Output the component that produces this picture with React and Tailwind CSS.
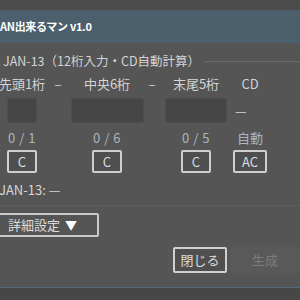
import React from "react";

const columns = [
  { label: "先頭1桁", count: "0 / 1", btn: "C", w: "w-[44px]", input: "w-[30px]" },
  { dash: true, w: "w-[28px]" },
  { label: "中央6桁", count: "0 / 6", btn: "C", w: "w-[70px]", input: "w-[73px]" },
  { dash: true, w: "w-[20px]" },
  { label: "末尾5桁", count: "0 / 5", btn: "C", w: "w-[68px]", input: "w-[62px]" },
];

function SmallButton({ children, className }) {
  return (
    <div
      className={
        "h-[23px] flex items-center justify-center border-2 border-[#cfcfcf] rounded-[2px] bg-[#4f4f4f] text-[13px] text-[#d6dde3] " +
        className
      }
    >
      {children}
    </div>
  );
}

function App() {
  return (
    <div className="w-[300px] h-[300px] overflow-hidden flex flex-col bg-[#4b4b4b] text-[#d4d4d4] font-['Noto_Sans_CJK_JP',sans-serif]">
      <div className="h-[10px] shrink-0" />
      <div className="h-[33px] shrink-0 bg-[#4b606c] flex items-center">
        <span className="-ml-[6px] text-[11px] font-bold tracking-[-0.3px] text-white whitespace-nowrap">
          JAN出来るマン v1.0
        </span>
      </div>

      <div className="h-[244px] shrink-0 bg-[#555555] flex flex-col">
        <div className="mt-[10px] h-[16px] flex items-center">
          <span className="ml-[3px] text-[12.5px] whitespace-nowrap">
            JAN-13（12桁入力・CD自動計算）
          </span>
          <div className="flex-1 h-px bg-[#6a6a6a] ml-[4px]" />
        </div>

        <div className="mt-[6px] flex">
          {columns.map((c, i) =>
            c.dash ? (
              <div key={i} className={c.w + " h-[18px] flex items-center justify-center text-[13px]"}>
                –
              </div>
            ) : (
              <div key={i} className={c.w + " flex flex-col items-center"}>
                <div className="h-[18px] flex items-center text-[13px] whitespace-nowrap">{c.label}</div>
                <div className={c.input + " mt-[5px] h-[25px] bg-[#464646] border border-[#4c4c4c] rounded-[3px]"} />
                <div className="mt-[5px] h-[20px] flex items-center text-[13px] tracking-[0.5px] text-[#aab5bf]">{c.count}</div>
                <SmallButton className="mt-[2px] w-[30px]">{c.btn}</SmallButton>
              </div>
            )
          )}
          <div className="w-[40px] flex flex-col items-center">
            <div className="h-[18px] flex items-center text-[13px]">CD</div>
            <div className="mt-[5px] h-[25px] w-full flex items-center pl-[5px] text-[13px]">—</div>
            <div className="mt-[5px] h-[20px] flex items-center text-[13px] text-[#aab5bf]">自動</div>
            <SmallButton className="mt-[2px] w-[34px]">AC</SmallButton>
          </div>
        </div>

        <div className="mt-[8px] h-[18px] flex items-center -ml-[1px] text-[13px] whitespace-nowrap">
          JAN-13: —
        </div>

        <div className="mt-[6px] h-px bg-[#5f5f5f]" />

        <div className="mt-[7px] h-[24px] w-[109px] -ml-[10px] flex items-center gap-[5px] pl-[16px] border-2 border-[#c9c9c9] rounded-[2px] text-[13px] text-[#dcdcdc]">
          <span>詳細設定</span>
          <span className="text-[12px] text-white">▼</span>
        </div>

        <div className="mt-[10px] h-[26px] flex">
          <div className="ml-[173px] w-[67px] h-full flex items-center justify-center border-2 border-[#d0d0d0] rounded-[2px] bg-[#4f4f4f] text-[13px] text-[#dcdcdc]">
            閉じる
          </div>
          <div className="ml-[3px] w-[70px] h-full shrink-0 flex items-center justify-center bg-[#595959] rounded-[2px] text-[13px] text-[#7c7c7c]">
            生成
          </div>
        </div>
      </div>

      <div className="h-px shrink-0 bg-[#52697a]" />
      <div className="flex-1 bg-[#474747]" />
    </div>
  );
}

export default App;
